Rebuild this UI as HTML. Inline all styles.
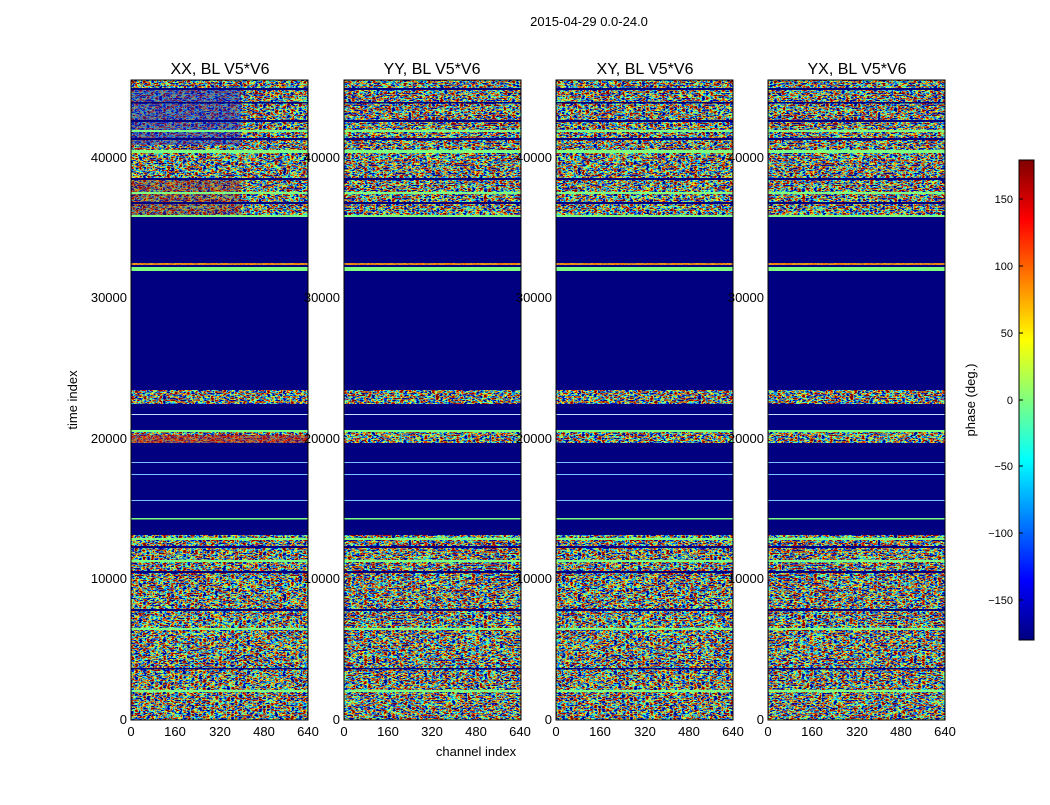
<!DOCTYPE html>
<html><head><meta charset="utf-8"><style>
body{margin:0;background:#fff;width:1050px;height:800px;overflow:hidden}
svg text{font-family:"Liberation Sans","DejaVu Sans",sans-serif;fill:#000}
</style></head><body>
<svg width="1050" height="800" viewBox="0 0 1050 800" xmlns="http://www.w3.org/2000/svg">
<defs>
<filter id="jet" x="0" y="0" width="177" height="640" filterUnits="userSpaceOnUse" color-interpolation-filters="sRGB">
<feTurbulence type="fractalNoise" baseFrequency="0.25 0.6" numOctaves="2" seed="3"/>
<feColorMatrix type="matrix" values="1 0 0 0 0 1 0 0 0 0 1 0 0 0 0 0 0 0 0 1"/>
<feComponentTransfer><feFuncR type="linear" slope="3.2" intercept="-1.1"/><feFuncG type="linear" slope="3.2" intercept="-1.1"/><feFuncB type="linear" slope="3.2" intercept="-1.1"/></feComponentTransfer>
<feComponentTransfer>
<feFuncR type="table" tableValues="0 0 0 0 0.5 1 1 1 0.5"/>
<feFuncG type="table" tableValues="0 0 0.5 1 1 1 0.5 0 0"/>
<feFuncB type="table" tableValues="0.5 1 1 1 0.5 0 0 0 0"/>
</feComponentTransfer>
</filter>
<filter id="jet2" x="0" y="0" width="177" height="640" filterUnits="userSpaceOnUse" color-interpolation-filters="sRGB">
<feTurbulence type="fractalNoise" baseFrequency="0.25 0.6" numOctaves="2" seed="11"/>
<feColorMatrix type="matrix" values="1 0 0 0 0 1 0 0 0 0 1 0 0 0 0 0 0 0 0 1"/>
<feComponentTransfer><feFuncR type="linear" slope="3.2" intercept="-1.1"/><feFuncG type="linear" slope="3.2" intercept="-1.1"/><feFuncB type="linear" slope="3.2" intercept="-1.1"/></feComponentTransfer>
<feComponentTransfer>
<feFuncR type="table" tableValues="0 0 0 0 0.5 1 1 1 0.5"/>
<feFuncG type="table" tableValues="0 0 0.5 1 1 1 0.5 0 0"/>
<feFuncB type="table" tableValues="0.5 1 1 1 0.5 0 0 0 0"/>
</feComponentTransfer>
</filter>
<g id="mask">
<rect x="0" y="8" width="177" height="2" fill="#000080"/>
<rect x="0" y="22" width="177" height="1.5" fill="#000080"/>
<rect x="0" y="40" width="177" height="2" fill="#000080"/>
<rect x="0" y="50" width="177" height="2" fill="#7fff7f"/>
<rect x="0" y="58" width="177" height="2" fill="#000080"/>
<rect x="0" y="70" width="177" height="3" fill="#7fff7f"/>
<rect x="0" y="98" width="177" height="2" fill="#000080"/>
<rect x="0" y="112" width="177" height="2" fill="#7fff7f"/>
<rect x="0" y="122" width="177" height="2" fill="#000080"/>
<rect x="0" y="135" width="177" height="2" fill="#7fff7f"/>
<rect x="0" y="137" width="177" height="46" fill="#000080"/>
<rect x="0" y="183" width="177" height="2" fill="#ff8a00" opacity="0.8"/>
<rect x="0" y="185" width="177" height="2" fill="#000080"/>
<rect x="0" y="187" width="177" height="4" fill="#7fff7f"/>
<rect x="0" y="191" width="177" height="119" fill="#000080"/>
<rect x="0" y="324" width="177" height="24" fill="#000080"/>
<rect x="0" y="334" width="177" height="1" fill="#bfe0ff"/>
<rect x="0" y="348" width="177" height="2" fill="#000080"/>
<rect x="0" y="350" width="177" height="2" fill="#7fff7f"/>
<rect x="0" y="363" width="177" height="92" fill="#000080"/>
<rect x="0" y="382" width="177" height="1" fill="#7fbfff"/>
<rect x="0" y="394" width="177" height="1" fill="#7fbfff"/>
<rect x="0" y="420" width="177" height="1" fill="#7fbfff"/>
<rect x="0" y="438" width="177" height="1.5" fill="#7fff7f"/>
<rect x="0" y="458" width="177" height="2" fill="#7fff7f"/>
<rect x="0" y="466" width="177" height="2" fill="#000080"/>
<rect x="0" y="480" width="177" height="2" fill="#7fff7f"/>
<rect x="0" y="491" width="177" height="2" fill="#000080"/>
<rect x="0" y="529" width="177" height="2" fill="#000080"/>
<rect x="0" y="548" width="177" height="2" fill="#7fff7f"/>
<rect x="0" y="588" width="177" height="1.5" fill="#000080"/>
<rect x="0" y="610" width="177" height="2" fill="#7fff7f"/>
<rect x="0" y="0" width="177" height="640" fill="none" stroke="#000" stroke-width="1"/>
</g>
<linearGradient id="cb" x1="0" y1="1" x2="0" y2="0">
<stop offset="0" stop-color="#000080"/><stop offset="0.125" stop-color="#0000ff"/><stop offset="0.375" stop-color="#00ffff"/><stop offset="0.625" stop-color="#ffff00"/><stop offset="0.875" stop-color="#ff0000"/><stop offset="1" stop-color="#800000"/>
</linearGradient>
</defs>

<text x="589" y="26" font-size="13" text-anchor="middle">2015-04-29 0.0-24.0</text>

<g transform="translate(131,80)">
<rect width="177" height="640" filter="url(#jet)"/>
<rect x="0" y="10" width="110" height="55" fill="#2020c0" opacity="0.45"/>
<rect x="0" y="100" width="110" height="35" fill="#8a1020" opacity="0.35"/>
<rect x="0" y="355" width="177" height="8" fill="#c01010" opacity="0.5"/>
<use href="#mask"/></g>
<g transform="translate(344,80)"><rect width="177" height="640" filter="url(#jet2)"/><use href="#mask"/></g>
<g transform="translate(556,80)"><rect width="177" height="640" filter="url(#jet)" transform="scale(-1,1) translate(-177,0)"/><use href="#mask"/></g>
<g transform="translate(768,80)"><rect width="177" height="640" filter="url(#jet2)" transform="scale(-1,1) translate(-177,0)"/><use href="#mask"/></g>

<g font-size="16" text-anchor="middle">
<text x="220" y="74">XX, BL V5*V6</text>
<text x="432" y="74">YY, BL V5*V6</text>
<text x="645" y="74">XY, BL V5*V6</text>
<text x="857" y="74">YX, BL V5*V6</text>
</g>

<g font-size="13" text-anchor="end">
<text x="127" y="162">40000</text><text x="127" y="302">30000</text><text x="127" y="443">20000</text><text x="127" y="583">10000</text><text x="127" y="724">0</text>
<text x="340" y="162">40000</text><text x="340" y="302">30000</text><text x="340" y="443">20000</text><text x="340" y="583">10000</text><text x="340" y="724">0</text>
<text x="552" y="162">40000</text><text x="552" y="302">30000</text><text x="552" y="443">20000</text><text x="552" y="583">10000</text><text x="552" y="724">0</text>
<text x="764" y="162">40000</text><text x="764" y="302">30000</text><text x="764" y="443">20000</text><text x="764" y="583">10000</text><text x="764" y="724">0</text>
</g>
<g font-size="13" text-anchor="middle">
<text x="131" y="736">0</text><text x="175" y="736">160</text><text x="220" y="736">320</text><text x="264" y="736">480</text><text x="308" y="736">640</text>
<text x="344" y="736">0</text><text x="388" y="736">160</text><text x="432" y="736">320</text><text x="476" y="736">480</text><text x="520" y="736">640</text>
<text x="556" y="736">0</text><text x="600" y="736">160</text><text x="645" y="736">320</text><text x="689" y="736">480</text><text x="733" y="736">640</text>
<text x="768" y="736">0</text><text x="812" y="736">160</text><text x="857" y="736">320</text><text x="901" y="736">480</text><text x="945" y="736">640</text>
<text x="476" y="756">channel index</text>
</g>
<text x="77" y="400" font-size="13" text-anchor="middle" transform="rotate(-90 77 400)">time index</text>

<rect x="1019" y="160" width="15" height="480" fill="url(#cb)" stroke="#000" stroke-width="1"/>
<g stroke="#000" stroke-width="1">
<line x1="1019" y1="199" x2="1023" y2="199"/><line x1="1019" y1="266" x2="1023" y2="266"/><line x1="1019" y1="333" x2="1023" y2="333"/><line x1="1019" y1="400" x2="1023" y2="400"/><line x1="1019" y1="466" x2="1023" y2="466"/><line x1="1019" y1="533" x2="1023" y2="533"/><line x1="1019" y1="600" x2="1023" y2="600"/>
</g>
<g font-size="11" text-anchor="end">
<text x="1013" y="203">150</text><text x="1013" y="270">100</text><text x="1013" y="337">50</text><text x="1013" y="404">0</text><text x="1013" y="470">−50</text><text x="1013" y="537">−100</text><text x="1013" y="604">−150</text>
</g>
<text x="975" y="400" font-size="13" text-anchor="middle" transform="rotate(-90 975 400)">phase (deg.)</text>
</svg>
</body></html>
